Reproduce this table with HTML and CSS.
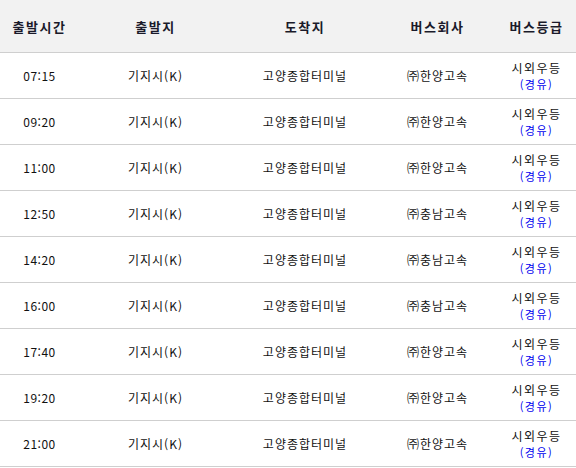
FILE: index.html
```html
<!DOCTYPE html>
<html lang="ko">
<head>
<meta charset="utf-8">
<link rel="stylesheet" href="styles.css">
</head>
<body>
<table class="timetable">
  <colgroup>
    <col class="c1"><col class="c2"><col class="c3"><col class="c4"><col class="c5">
  </colgroup>
  <thead>
    <tr><th>출발시간</th><th>출발지</th><th>도착지</th><th>버스회사</th><th>버스등급</th></tr>
  </thead>
  <tbody>
    <tr><td class="time">07:15</td><td>기지시(K)</td><td>고양종합터미널</td><td>㈜한양고속</td><td class="grade"><span class="kind">시외우등</span><span class="via">(경유)</span></td></tr>
    <tr><td class="time">09:20</td><td>기지시(K)</td><td>고양종합터미널</td><td>㈜한양고속</td><td class="grade"><span class="kind">시외우등</span><span class="via">(경유)</span></td></tr>
    <tr><td class="time">11:00</td><td>기지시(K)</td><td>고양종합터미널</td><td>㈜한양고속</td><td class="grade"><span class="kind">시외우등</span><span class="via">(경유)</span></td></tr>
    <tr><td class="time">12:50</td><td>기지시(K)</td><td>고양종합터미널</td><td>㈜충남고속</td><td class="grade"><span class="kind">시외우등</span><span class="via">(경유)</span></td></tr>
    <tr><td class="time">14:20</td><td>기지시(K)</td><td>고양종합터미널</td><td>㈜충남고속</td><td class="grade"><span class="kind">시외우등</span><span class="via">(경유)</span></td></tr>
    <tr><td class="time">16:00</td><td>기지시(K)</td><td>고양종합터미널</td><td>㈜충남고속</td><td class="grade"><span class="kind">시외우등</span><span class="via">(경유)</span></td></tr>
    <tr><td class="time">17:40</td><td>기지시(K)</td><td>고양종합터미널</td><td>㈜한양고속</td><td class="grade"><span class="kind">시외우등</span><span class="via">(경유)</span></td></tr>
    <tr><td class="time">19:20</td><td>기지시(K)</td><td>고양종합터미널</td><td>㈜한양고속</td><td class="grade"><span class="kind">시외우등</span><span class="via">(경유)</span></td></tr>
    <tr><td class="time">21:00</td><td>기지시(K)</td><td>고양종합터미널</td><td>㈜한양고속</td><td class="grade"><span class="kind">시외우등</span><span class="via">(경유)</span></td></tr>
  </tbody>
</table>
</body>
</html>
```

FILE: styles.css
```css
html, body {
  margin: 0;
  padding: 0;
  background: #fff;
}
body {
  font-family: "Noto Sans CJK KR", "Noto Sans", sans-serif;
  font-size: 12px;
  color: #111;
}
.timetable {
  width: 576px;
  border-collapse: collapse;
  table-layout: fixed;
}
.c1 { width: 79px; }
.c2 { width: 153px; }
.c3 { width: 146px; }
.c4 { width: 119px; }
.c5 { width: 79px; }
.timetable thead th {
  height: 52px;
  padding: 0;
  background: #f2f2f2;
  border-bottom: 1px solid #cfcfcf;
  font-size: 13px;
  font-weight: bold;
  letter-spacing: 1.5px;
  color: #1a1a2a;
  text-align: center;
  vertical-align: middle;
}
.timetable tbody td {
  height: 45px;
  padding: 0;
  border-bottom: 1px solid #cfcfcf;
  text-align: center;
  vertical-align: middle;
  letter-spacing: 1px;
  line-height: 14px;
}
.timetable tbody td.time {
  letter-spacing: 0.5px;
  font-size: 12px;
}
.kind {
  display: block;
  letter-spacing: 1.5px;
  font-size: 12px;
  line-height: 17px;
}
.via {
  display: block;
  color: #0000ee;
  font-size: 11px;
  line-height: 16px;
  letter-spacing: 1.5px;
}
```
